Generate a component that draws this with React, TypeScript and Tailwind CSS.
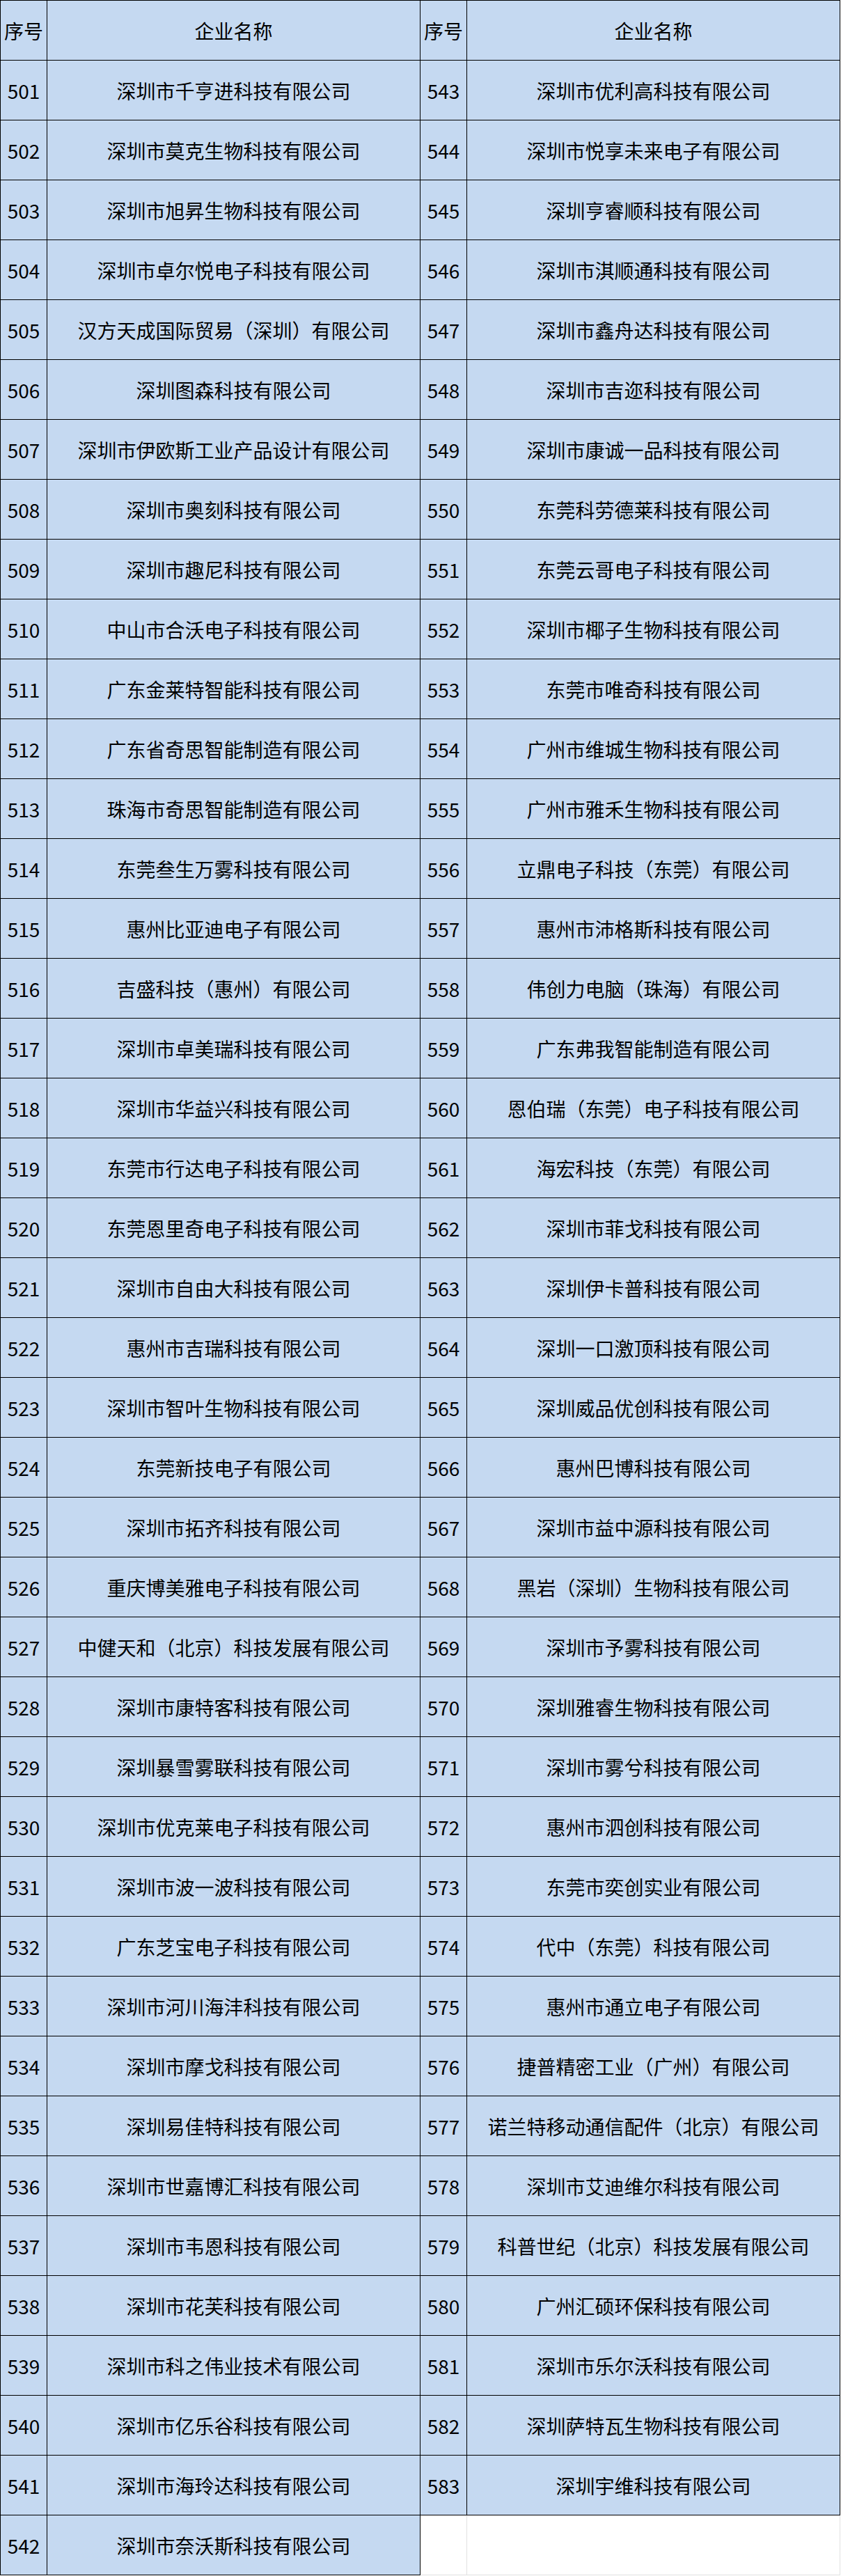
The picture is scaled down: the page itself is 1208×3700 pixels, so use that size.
import React from 'react';

const left: string[] = [
  '深圳市千亨进科技有限公司',
  '深圳市莫克生物科技有限公司',
  '深圳市旭昇生物科技有限公司',
  '深圳市卓尔悦电子科技有限公司',
  '汉方天成国际贸易（深圳）有限公司',
  '深圳图森科技有限公司',
  '深圳市伊欧斯工业产品设计有限公司',
  '深圳市奥刻科技有限公司',
  '深圳市趣尼科技有限公司',
  '中山市合沃电子科技有限公司',
  '广东金莱特智能科技有限公司',
  '广东省奇思智能制造有限公司',
  '珠海市奇思智能制造有限公司',
  '东莞叁生万雾科技有限公司',
  '惠州比亚迪电子有限公司',
  '吉盛科技（惠州）有限公司',
  '深圳市卓美瑞科技有限公司',
  '深圳市华益兴科技有限公司',
  '东莞市行达电子科技有限公司',
  '东莞恩里奇电子科技有限公司',
  '深圳市自由大科技有限公司',
  '惠州市吉瑞科技有限公司',
  '深圳市智叶生物科技有限公司',
  '东莞新技电子有限公司',
  '深圳市拓齐科技有限公司',
  '重庆博美雅电子科技有限公司',
  '中健天和（北京）科技发展有限公司',
  '深圳市康特客科技有限公司',
  '深圳暴雪雾联科技有限公司',
  '深圳市优克莱电子科技有限公司',
  '深圳市波一波科技有限公司',
  '广东芝宝电子科技有限公司',
  '深圳市河川海沣科技有限公司',
  '深圳市摩戈科技有限公司',
  '深圳易佳特科技有限公司',
  '深圳市世嘉博汇科技有限公司',
  '深圳市韦恩科技有限公司',
  '深圳市花芙科技有限公司',
  '深圳市科之伟业技术有限公司',
  '深圳市亿乐谷科技有限公司',
  '深圳市海玲达科技有限公司',
  '深圳市奈沃斯科技有限公司',
];

const right: string[] = [
  '深圳市优利高科技有限公司',
  '深圳市悦享未来电子有限公司',
  '深圳亨睿顺科技有限公司',
  '深圳市淇顺通科技有限公司',
  '深圳市鑫舟达科技有限公司',
  '深圳市吉迩科技有限公司',
  '深圳市康诚一品科技有限公司',
  '东莞科劳德莱科技有限公司',
  '东莞云哥电子科技有限公司',
  '深圳市椰子生物科技有限公司',
  '东莞市唯奇科技有限公司',
  '广州市维城生物科技有限公司',
  '广州市雅禾生物科技有限公司',
  '立鼎电子科技（东莞）有限公司',
  '惠州市沛格斯科技有限公司',
  '伟创力电脑（珠海）有限公司',
  '广东弗我智能制造有限公司',
  '恩伯瑞（东莞）电子科技有限公司',
  '海宏科技（东莞）有限公司',
  '深圳市菲戈科技有限公司',
  '深圳伊卡普科技有限公司',
  '深圳一口激顶科技有限公司',
  '深圳威品优创科技有限公司',
  '惠州巴博科技有限公司',
  '深圳市益中源科技有限公司',
  '黑岩（深圳）生物科技有限公司',
  '深圳市予雾科技有限公司',
  '深圳雅睿生物科技有限公司',
  '深圳市雾兮科技有限公司',
  '惠州市泗创科技有限公司',
  '东莞市奕创实业有限公司',
  '代中（东莞）科技有限公司',
  '惠州市通立电子有限公司',
  '捷普精密工业（广州）有限公司',
  '诺兰特移动通信配件（北京）有限公司',
  '深圳市艾迪维尔科技有限公司',
  '科普世纪（北京）科技发展有限公司',
  '广州汇硕环保科技有限公司',
  '深圳市乐尔沃科技有限公司',
  '深圳萨特瓦生物科技有限公司',
  '深圳宇维科技有限公司',
];

const cell = 'border border-black bg-[#c5d9f1] p-0 text-center align-middle whitespace-nowrap';
const blank = 'border border-[#e2e2e2] bg-white p-0';

export default function App() {
  return (
    <div className="w-[1208px] bg-white font-['Noto_Sans_CJK_SC','Noto_Sans',sans-serif] text-[28px] leading-none text-black">
      <table className="table-fixed border-collapse w-[1206px]">
        <colgroup>
          <col className="w-[67px]" />
          <col className="w-[536px]" />
          <col className="w-[67px]" />
          <col className="w-[536px]" />
        </colgroup>
        <tbody>
          <tr className="h-[86px]">
            <td className={cell}>序号</td>
            <td className={cell}>企业名称</td>
            <td className={cell}>序号</td>
            <td className={cell}>企业名称</td>
          </tr>
          {left.map((name, i) => {
            const r = right[i];
            return (
              <tr key={i} className="h-[86px]">
                <td className={cell}>{501 + i}</td>
                <td className={cell}>{name}</td>
                {r ? (
                  <>
                    <td className={cell}>{543 + i}</td>
                    <td className={cell}>{r}</td>
                  </>
                ) : (
                  <>
                    <td className={blank}></td>
                    <td className={blank}></td>
                  </>
                )}
              </tr>
            );
          })}
        </tbody>
      </table>
    </div>
  );
}
